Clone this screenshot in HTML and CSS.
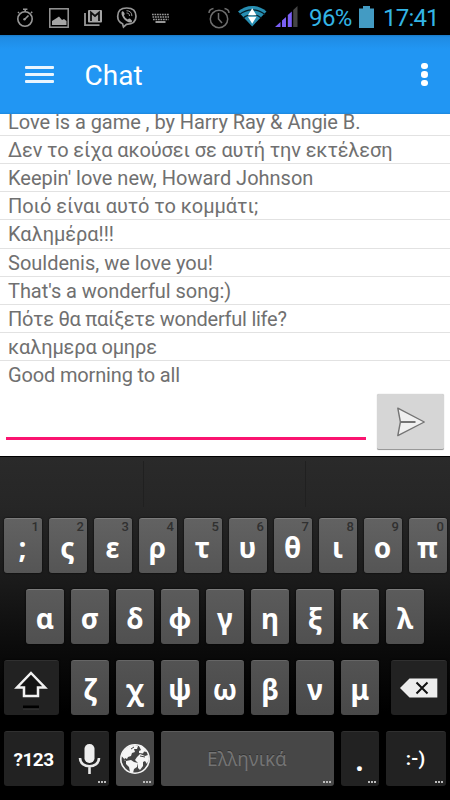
FILE: index.html
```html
<!DOCTYPE html>
<html lang="el">
<head>
<meta charset="utf-8">
<title>Chat</title>
<link rel="stylesheet" href="styles.css">
</head>
<body>
<div class="phone">
  <div class="status">
    <svg class="notifications" width="180" height="35" viewBox="0 0 180 35" fill="none" stroke="#979797">
      <circle cx="25" cy="19" r="7.2" stroke-width="1.6"/><path d="M23 9.2h4.4M25.2 9v3M25 19l3.5-3.5M19 13l-1-1M31 13l1.2-1.2" stroke-width="1.6"/><circle cx="24.5" cy="19.3" r="1.2" fill="#979797" stroke="none"/>
      <rect x="49.8" y="8.8" width="18.4" height="18.4" stroke-width="1.5"/><path d="M52 25v-4l4-2.5 3-2 3 3.5 2-1 2.500 2v4z" fill="#a5a5a5" stroke="none"/>
      <path d="M85 13v12.200h14.500" stroke-width="1.8"/><rect x="88" y="10" width="14" height="12.500" rx="1" fill="#a5a5a5" stroke="none"/><path d="M91 21v-8.500l4 3.500 4-3.500V21" stroke="#111" stroke-width="1.8"/>
      <path d="M122.500 23.700c-4-1.500-4.800-4-4.800-7.400 0-5.500 3.200-8.300 9-8.300s9.300 3 9.300 8.300c0 5.700-4 8-9.500 8l-3 2.700z" stroke-width="1.7"/><path d="M121.500 12.500c.5-1.500 1.500-1.500 2.400-.3 1.200 1.700.8 2.300 0 3 .8 2.200 2.200 3.500 4 4.200 1-1 1.800-1.200 3 0 1.800 1.300 1.500 2 .2 3-3.500 1.400-10.200-5.200-9.600-9.900z" fill="#a5a5a5" stroke="none"/><path d="M126.500 13c2 0 3 1 3 3M126.500 10.700c3.500 0 5.400 2 5.400 5.400"/>
      <path d="M152 14.500h17M152.500 17h16.500M153 19.500h15.500" stroke-width="1.700" stroke-dasharray="1.700 .8"/><path d="M155.500 22h10" stroke-width="2"/>
    </svg>
    <svg class="signals" width="92" height="35" viewBox="207 0 92 35" fill="none">
      <g stroke="#6e6e6e" stroke-width="1.500"><circle cx="219" cy="19" r="8.700"/><path d="M218.500 13v6l3.500 4M209 13c0-2 2-4 4.500-4.500M224.500 8.500c2.500.5 4.500 2.500 4.500 4.500"/></g>
      <path d="M238 11.500C246 4 258 4 266.500 11.500L252.200 26.500z" fill="#278eb2"/><path d="M239.500 14.500c7.500-6.300 18-6.300 25.500 0M243 18.200c5.500-4.800 13-4.800 18.500 0" stroke="#06202a" stroke-width="1.300"/><path d="M252.200 8.200l4.300 7h-8.600zM252.200 23.700l4.300-7h-8.600z" fill="#fff"/>
      <path d="M275 27l5.500-5v5z M282 20.500l4-3.500v10h-4z M287.800 15l4-3.500V27h-4z" fill="#7b60f5"/><path d="M293.200 10l4.300-4v21h-4.300z" fill="#454545"/>
    </svg>
    <span class="percent">96%</span>
    <svg class="battery" width="15" height="22" viewBox="0 0 15 22"><path d="M0 2.500h4V0h7v2.500h4V22H0z" fill="#439bc3"/></svg>
    <span class="clock">17:41</span>
  </div>
  <header class="toolbar">
    <div class="menu"><i></i><i></i><i></i></div>
    <h1>Chat</h1>
    <div class="more"><i></i><i></i><i></i></div>
  </header>
  <main class="messages">
    <p class="m1">Love is a game , by Harry Ray &amp; Angie B.</p>
    <p class="m2">Δεν το είχα ακούσει σε αυτή την εκτέλεση</p>
    <p class="m3">Keepin' love new, Howard Johnson</p>
    <p class="m4">Ποιό είναι αυτό το κομμάτι;</p>
    <p class="m5">Καλημέρα!!!</p>
    <p class="m6">Souldenis, we love you!</p>
    <p class="m7">That's a wonderful song:)</p>
    <p class="m8">Πότε θα παίξετε wonderful life?</p>
    <p class="m9">καλημερα ομηρε</p>
    <p class="m10">Good morning to all</p>
  </main>
  <div class="compose">
    <div class="field"></div>
    <div class="send"><svg width="30" height="30" viewBox="0 0 30 30"><path d="M1.800 1.200L28.300 15 1.800 28.600 4.400 15z" fill="#f0f0f0" stroke="#747474" stroke-width="1.400" stroke-linejoin="round"/><path d="M4 15h15.500" stroke="#747474" stroke-width="2"/></svg></div>
  </div>
  <div class="keyboard">
    <div class="suggest"><i></i><i></i><i></i></div>
    <div class="row r1">
      <div class="key">;<sup>1</sup></div><div class="key">ς<sup>2</sup></div><div class="key">ε<sup>3</sup></div><div class="key">ρ<sup>4</sup></div><div class="key">τ<sup>5</sup></div><div class="key">υ<sup>6</sup></div><div class="key">θ<sup>7</sup></div><div class="key">ι<sup>8</sup></div><div class="key">ο<sup>9</sup></div><div class="key">π<sup>0</sup></div>
    </div>
    <div class="row r2">
      <div class="key">α</div><div class="key">σ</div><div class="key">δ</div><div class="key">φ</div><div class="key">γ</div><div class="key">η</div><div class="key">ξ</div><div class="key">κ</div><div class="key">λ</div>
    </div>
    <div class="row r3">
      <div class="key dark shift"><svg width="34" height="40" viewBox="0 0 34 40"><path d="M17 3L31 17.500h-7V26H10v-8.500H3z" fill="#151515" stroke="#f2f2f2" stroke-width="2.500"/><path d="M9 37h16" stroke="#000" stroke-width="3"/><path d="M9 39h16" stroke="#3b3b3b"/></svg></div>
      <div class="key">ζ</div><div class="key">χ</div><div class="key">ψ</div><div class="key">ω</div><div class="key">β</div><div class="key">ν</div><div class="key">μ</div>
      <div class="key dark erase"><svg width="38" height="20" viewBox="0 0 38 20"><path d="M0 10L9.500.5H37.300v19H9.500z" fill="#ededed"/><path d="M16.500 4.500l11 11M27.500 4.500l-11 11" stroke="#111" stroke-width="2"/></svg></div>
    </div>
    <div class="row r4">
      <div class="key dark symbols">?123</div>
      <div class="key dark"><svg width="23" height="32" viewBox="0 0 23 32"><rect x="6.500" y="1" width="10" height="19" rx="4.800" fill="#eee"/><path d="M2 15c0 11 19 11 19 0M11.500 23.500V31" fill="none" stroke="#e8e8e8" stroke-width="2.600"/></svg><b class="dots"></b></div>
      <div class="key globe"><svg width="30" height="30" viewBox="0 0 30 30"><circle cx="15" cy="15" r="14.200" fill="#444" stroke="#f5f5f5" stroke-width="1.600"/><path d="M1.500 12C3 5 9 1 15 1l3 1-1 3-3 0 1 3-3 1-1 3-3 1-1 2-2-1-1 2 2 1zM6 17l5-1 3 2 4 1-1 4-3 2-1 4-3-1-1-5-3-3zM19 2l3-.5L27 8l-3-.5-1 2-4-.5 0-2 2-1zM17 13l3-3 5 2 3-1 1 4-2 5-2-3-2 1 0 4-3 4-2-2v-5l-3-3z" fill="#f5f5f5"/><path d="M20 12l5 1M11 5l3-2" stroke="#444" stroke-width="1"/></svg><b class="dots"></b></div>
      <div class="key space">Ελληνικά<b class="dots"></b></div>
      <div class="key dark period">.<b class="dots"></b></div>
      <div class="key dark smile">:-)<b class="dots"></b></div>
    </div>
  </div>
</div>
</body>
</html>
```
FILE: styles.css
```css
* { box-sizing: border-box; }
body { margin: 0; font-family: Roboto, "Noto Sans", sans-serif; background: #fff; }
svg { display: block; flex: none; }
.phone { width: 450px; height: 800px; display: flex; flex-direction: column; overflow: hidden; }

.status { height: 35px; flex: none; background: #000; display: flex; align-items: flex-start; color: #33b5e5; font-size: 24px; line-height: 37px; white-space: nowrap; }
.signals { margin-left: 27px; }
.percent { width: 50px; margin-left: 10px; letter-spacing: -.6px; }
.battery { margin: 6px 9px 0 0; }
.clock { letter-spacing: -.8px; }

.toolbar { height: 79px; flex: none; background: linear-gradient(#1a78c3 0, #1f8be3 2px, #2196f3 14px, #2196f3 77px, #1d87dc 79px); display: flex; align-items: center; padding: 0 22.300px 0 25px; }
.menu { width: 29px; display: grid; gap: 4px; }
.menu i { height: 3px; background: #eaf5fe; border-radius: 1px; }
h1 { margin: 2px 0 0 30.500px; flex: 1; color: #fff; font-size: 28px; font-weight: 400; line-height: 34px; }
.more { display: grid; gap: 2px; }
.more i { width: 6.400px; height: 6.400px; border-radius: 50%; background: #fff; }

.messages { height: 275px; flex: none; overflow: hidden; display: flex; flex-direction: column; justify-content: flex-end; }
.messages p { margin: 0; height: 28.100px; flex: none; padding-left: 8px; border-bottom: 1px solid #e2e2e2; color: #707070; font-size: 20px; line-height: 29px; white-space: nowrap; }
.messages p:last-child { border-bottom: 0; }
.messages .m1 { height: 22px; line-height: 17px; letter-spacing: -.05px; }
.messages .m2 { letter-spacing: -.12px; }
.messages .m4 { letter-spacing: -.04px; }
.messages .m5, .messages .m7 { letter-spacing: -.04px; }
.messages .m8 { letter-spacing: -.25px; }
.messages .m9, .messages .m10 { letter-spacing: -.15px; }

.compose { height: 67px; flex: none; display: flex; padding: 5px 6px 0; gap: 11px; }
.field { width: 360px; height: 46px; border-bottom: 3px solid #fa1470; }
.send { width: 67px; height: 56px; background: #d6d6d6; border-radius: 2px; border-bottom: 1px solid #999; box-shadow: 0 0 1px #aaa; display: grid; place-items: center; }

.keyboard { height: 344px; flex: none; background: linear-gradient(#2a2a2a 0, #262626 50px, #1a1a1a 125px, #0b0b0b 190px, #000 255px); border-top: 1px solid #000; }
.suggest { height: 61px; padding-top: 4px; display: flex; }
.suggest i { width: 162px; height: 46px; border-right: 1px solid #202020; }
.suggest i:first-child { width: 144px; }
.suggest i:last-child { border: 0; flex: 1; }
.row { height: 55px; margin: 0 3.500px 16px; display: flex; gap: 7px; }
.r2 { margin-left: 26px; }
.key { position: relative; width: 38px; height: 55px; flex: none; display: flex; align-items: center; justify-content: center; border-radius: 3px; background: linear-gradient(#626262, #555); border-top: 1px solid #7b7b7b; box-shadow: 0 0 2px #000; color: #fff; font-family: "Noto Sans", sans-serif; font-weight: 700; font-size: 28px; line-height: 36px; padding-top: 1px; }
.r2 .key { background: linear-gradient(#5b5b5b, #505050); }
.r3 .key { background: linear-gradient(#535353, #494949); border-color: #666; }
.r4 .key { background: #474747; border-color: #5c5c5c; }
.row .dark { background: #222; border-color: #303030; }
.key sup { position: absolute; top: 0; right: 2.500px; font: 500 13px/15px Roboto, sans-serif; color: #303030; }
.row .shift, .row .erase { width: 55.500px; }
.row .shift { margin-right: 5px; padding-top: 4px; }
.row .erase { margin-left: 5px; padding-top: 0; }
.key.symbols { width: 60px; font-size: 19px; font-family: Roboto, sans-serif; padding-top: 2px; letter-spacing: -.5px; }
.r4 .key svg { margin-top: -2px; }
.key.space { width: 173px; color: #747474; font-size: 19px; font-weight: 400; padding-top: 0; text-shadow: 0 -1px #333; }
.key.smile { width: 60px; font-size: 19px; font-family: Roboto, sans-serif; padding-top: 0; }
.dots { position: absolute; right: 3px; bottom: 3px; width: 8px; height: 2px; background: repeating-linear-gradient(90deg, #bbb 0 2px, transparent 2px 3px); }
```
